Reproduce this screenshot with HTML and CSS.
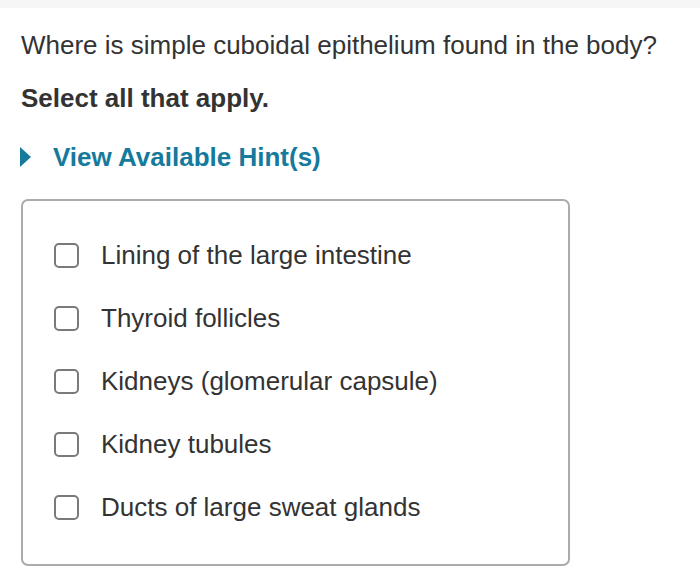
FILE: index.html
```html
<!DOCTYPE html>
<html>
<head>
<meta charset="utf-8">
<link rel="stylesheet" href="styles.css">
</head>
<body>
<div class="topbar"></div>
<div class="content">
  <p class="question">Where is simple cuboidal epithelium found in the body?</p>
  <p class="instruction">Select all that apply.</p>
  <div class="hint">
    <svg class="caret" width="11" height="20" viewBox="0 0 11 20"><path d="M0 0 L11 10 L0 20 Z" fill="#157a9c"/></svg>
    <span class="hint-text">View Available Hint(s)</span>
  </div>
  <div class="options">
    <label class="option"><span class="box"></span><span>Lining of the large intestine</span></label>
    <label class="option"><span class="box"></span><span>Thyroid follicles</span></label>
    <label class="option"><span class="box"></span><span>Kidneys (glomerular capsule)</span></label>
    <label class="option"><span class="box"></span><span>Kidney tubules</span></label>
    <label class="option"><span class="box"></span><span>Ducts of large sweat glands</span></label>
  </div>
</div>
</body>
</html>
```

FILE: styles.css
```css
html, body {
  margin: 0;
  padding: 0;
  background: #fff;
}
body {
  font-family: "Liberation Sans", Arial, sans-serif;
  color: #333;
}
.topbar {
  height: 8px;
  background: #f6f6f6;
}
.content {
  padding: 0 0 0 21px;
}
.question {
  margin: 0;
  padding-top: 22px;
  font-size: 26px;
  line-height: 30px;
}
.instruction {
  margin: 0;
  padding-top: 23px;
  font-size: 26px;
  line-height: 30px;
  font-weight: bold;
}
.hint {
  display: flex;
  align-items: center;
  margin-top: 29px;
  height: 30px;
}
.caret {
  display: block;
  margin-left: -1px;
}
.hint-text {
  margin-left: 22px;
  font-size: 26px;
  line-height: 30px;
  font-weight: bold;
  color: #157a9c;
}
.options {
  margin-top: 27px;
  width: 549px;
  border: 2px solid #ababab;
  border-radius: 7px;
  padding: 39px 0 42px 0;
  display: flex;
  flex-direction: column;
  gap: 33px;
  box-sizing: border-box;
}
.option {
  display: flex;
  align-items: center;
  height: 30px;
  padding-left: 31px;
  font-size: 26px;
  line-height: 30px;
}
.box {
  width: 21px;
  height: 21px;
  border: 2px solid #7a7a7a;
  border-radius: 5px;
  margin-right: 22px;
  flex: none;
}
```
